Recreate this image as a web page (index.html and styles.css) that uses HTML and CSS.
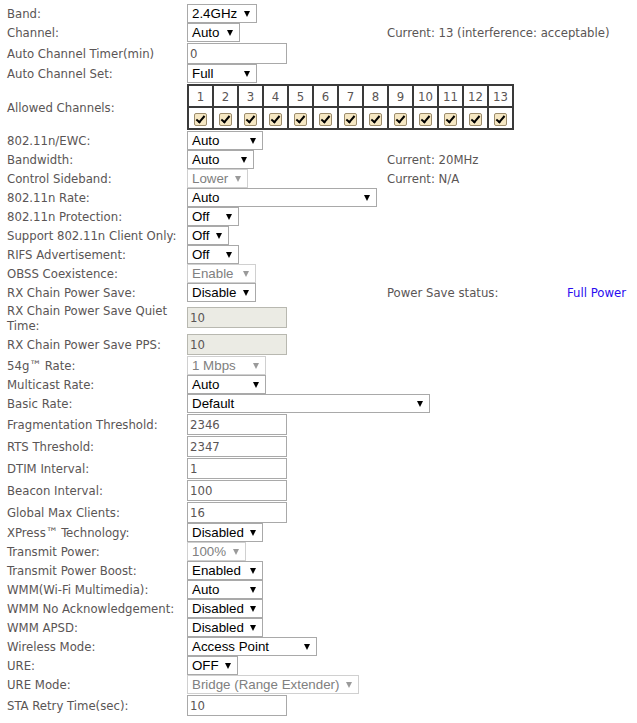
FILE: index.html
```html
<!DOCTYPE html>
<html>
<head>
<meta charset="utf-8">
<link rel="stylesheet" href="styles.css">
</head>
<body>
<div class="form">
  <div class="row rs"><div class="lbl">Band:</div><div class="ctl"><div class="sel w70"><span>2.4GHz</span><i class="arr"></i></div></div></div>
  <div class="row rs"><div class="lbl">Channel:</div><div class="ctl"><div class="sel w53"><span>Auto</span><i class="arr"></i></div></div><div class="info">Current: 13 (interference: acceptable)</div></div>
  <div class="row ri"><div class="lbl">Auto Channel Timer(min)</div><div class="ctl"><div class="inp">0</div></div></div>
  <div class="row rs"><div class="lbl">Auto Channel Set:</div><div class="ctl"><div class="sel w70"><span>Full</span><i class="arr"></i></div></div></div>
  <div class="row rch"><div class="lbl">Allowed Channels:</div><div class="ctl">
    <table class="chan">
      <tr><td>1</td><td>2</td><td>3</td><td>4</td><td>5</td><td>6</td><td>7</td><td>8</td><td>9</td><td>10</td><td>11</td><td>12</td><td>13</td></tr>
      <tr>
        <td><span class="cb"></span></td><td><span class="cb"></span></td><td><span class="cb"></span></td><td><span class="cb"></span></td><td><span class="cb"></span></td><td><span class="cb"></span></td><td><span class="cb"></span></td><td><span class="cb"></span></td><td><span class="cb"></span></td><td><span class="cb"></span></td><td><span class="cb"></span></td><td><span class="cb"></span></td><td><span class="cb"></span></td>
      </tr>
    </table>
  </div></div>
  <div class="row rs"><div class="lbl">802.11n/EWC:</div><div class="ctl"><div class="sel w76"><span>Auto</span><i class="arr"></i></div></div></div>
  <div class="row rs"><div class="lbl">Bandwidth:</div><div class="ctl"><div class="sel w67"><span>Auto</span><i class="arr"></i></div></div><div class="info">Current: 20MHz</div></div>
  <div class="row rs"><div class="lbl">Control Sideband:</div><div class="ctl"><div class="sel w61 dis"><span>Lower</span><i class="arr"></i></div></div><div class="info">Current: N/A</div></div>
  <div class="row rs"><div class="lbl">802.11n Rate:</div><div class="ctl"><div class="sel w190"><span>Auto</span><i class="arr"></i></div></div></div>
  <div class="row rs"><div class="lbl">802.11n Protection:</div><div class="ctl"><div class="sel w52"><span>Off</span><i class="arr"></i></div></div></div>
  <div class="row rs"><div class="lbl">Support 802.11n Client Only:</div><div class="ctl"><div class="sel w42"><span>Off</span><i class="arr"></i></div></div></div>
  <div class="row rs"><div class="lbl">RIFS Advertisement:</div><div class="ctl"><div class="sel w52"><span>Off</span><i class="arr"></i></div></div></div>
  <div class="row rs"><div class="lbl">OBSS Coexistence:</div><div class="ctl"><div class="sel w69 dis"><span>Enable</span><i class="arr"></i></div></div></div>
  <div class="row rs"><div class="lbl">RX Chain Power Save:</div><div class="ctl"><div class="sel w69"><span>Disable</span><i class="arr"></i></div></div><div class="info i180">Power Save status:</div><div class="link">Full Power</div></div>
  <div class="row rq"><div class="lbl">RX Chain Power Save Quiet Time:</div><div class="ctl"><div class="inp dis">10</div></div></div>
  <div class="row rp"><div class="lbl">RX Chain Power Save PPS:</div><div class="ctl"><div class="inp dis">10</div></div></div>
  <div class="row rs"><div class="lbl">54g™ Rate:</div><div class="ctl"><div class="sel w79 dis"><span>1 Mbps</span><i class="arr"></i></div></div></div>
  <div class="row rs"><div class="lbl">Multicast Rate:</div><div class="ctl"><div class="sel w79"><span>Auto</span><i class="arr"></i></div></div></div>
  <div class="row rs"><div class="lbl">Basic Rate:</div><div class="ctl"><div class="sel w243"><span>Default</span><i class="arr"></i></div></div></div>
  <div class="row ri"><div class="lbl">Fragmentation Threshold:</div><div class="ctl"><div class="inp">2346</div></div></div>
  <div class="row ri"><div class="lbl">RTS Threshold:</div><div class="ctl"><div class="inp">2347</div></div></div>
  <div class="row ri"><div class="lbl">DTIM Interval:</div><div class="ctl"><div class="inp">1</div></div></div>
  <div class="row ri"><div class="lbl">Beacon Interval:</div><div class="ctl"><div class="inp">100</div></div></div>
  <div class="row ri"><div class="lbl">Global Max Clients:</div><div class="ctl"><div class="inp">16</div></div></div>
  <div class="row rs"><div class="lbl">XPress™ Technology:</div><div class="ctl"><div class="sel w76"><span>Disabled</span><i class="arr"></i></div></div></div>
  <div class="row rs"><div class="lbl">Transmit Power:</div><div class="ctl"><div class="sel w59 dis"><span>100%</span><i class="arr"></i></div></div></div>
  <div class="row rs"><div class="lbl">Transmit Power Boost:</div><div class="ctl"><div class="sel w76"><span>Enabled</span><i class="arr"></i></div></div></div>
  <div class="row rs"><div class="lbl">WMM(Wi-Fi Multimedia):</div><div class="ctl"><div class="sel w76"><span>Auto</span><i class="arr"></i></div></div></div>
  <div class="row rs"><div class="lbl">WMM No Acknowledgement:</div><div class="ctl"><div class="sel w76"><span>Disabled</span><i class="arr"></i></div></div></div>
  <div class="row rs"><div class="lbl">WMM APSD:</div><div class="ctl"><div class="sel w76"><span>Disabled</span><i class="arr"></i></div></div></div>
  <div class="row rs"><div class="lbl">Wireless Mode:</div><div class="ctl"><div class="sel w130"><span>Access Point</span><i class="arr"></i></div></div></div>
  <div class="row rs"><div class="lbl">URE:</div><div class="ctl"><div class="sel w51"><span>OFF</span><i class="arr"></i></div></div></div>
  <div class="row rs"><div class="lbl">URE Mode:</div><div class="ctl"><div class="sel w172 dis"><span>Bridge (Range Extender)</span><i class="arr"></i></div></div></div>
  <div class="row ri"><div class="lbl">STA Retry Time(sec):</div><div class="ctl"><div class="inp">10</div></div></div>
</div>
</body>
</html>
```

FILE: styles.css
```css
html, body {
  margin: 0;
  padding: 0;
  background: #ffffff;
}
.form {
  padding: 4px 0 0 7px;
  font-family: "DejaVu Sans Condensed", "DejaVu Sans", sans-serif;
  font-size: 13px;
  color: #5a5555;
}
.row {
  display: flex;
  align-items: center;
}
.rs { height: 19px; }
.ri { height: 22px; }
.rch { height: 48px; }
.rq { height: 31px; }
.rp { height: 23px; }
.lbl {
  width: 180px;
  flex: none;
  line-height: 15px;
  padding-right: 4px;
  box-sizing: border-box;
}
.ctl {
  width: 200px;
  flex: none;
  display: flex;
  align-items: center;
}
.info { flex: none; }
.i180 { width: 180px; }
.link { color: #2a0cf0; }
.sel {
  box-sizing: border-box;
  height: 19px;
  border: 1px solid #a9a9a9;
  background: #fff;
  display: flex;
  align-items: center;
  justify-content: space-between;
  padding: 0 6px 0 4px;
  font-family: "Liberation Sans", Arial, sans-serif;
  font-size: 13.333px;
  color: #000;
  white-space: nowrap;
  flex: none;
}
.sel .arr {
  width: 0;
  height: 0;
  border-left: 3.5px solid transparent;
  border-right: 3.5px solid transparent;
  border-top: 6px solid #000;
  margin-left: 4px;
}
.sel.dis {
  color: #808080;
  border-color: #d0d0d0;
}
.sel.dis .arr { border-top-color: #9a9a9a; }
.w42 { width: 42px; }
.w51 { width: 51px; }
.w52 { width: 52px; }
.w53 { width: 53px; }
.w59 { width: 59px; }
.w61 { width: 61px; }
.w67 { width: 67px; }
.w69 { width: 69px; }
.w70 { width: 70px; }
.w76 { width: 76px; }
.w79 { width: 79px; }
.w130 { width: 130px; }
.w172 { width: 172px; }
.w190 { width: 190px; }
.w243 { width: 243px; }
.inp {
  box-sizing: border-box;
  width: 100px;
  height: 21px;
  border: 1px solid #a9a9a9;
  background: #fff;
  padding: 0 2px;
  line-height: 19px;
  font-size: 13px;
  color: #5a5555;
}
.inp.dis {
  background: #ebebe4;
  border-color: #b8b8b0;
}
.chan {
  flex: none;
  border-collapse: collapse;
  border: 2px solid #3a3a3a;
  margin: 0;
  table-layout: fixed;
  width: 327px;
}
.chan td {
  border: 2px solid #3a3a3a;
  width: 23px;
  height: 20px;
  padding: 0;
  text-align: center;
  font-size: 13px;
  color: #5a5555;
}
.cb {
  display: inline-block;
  width: 11px;
  height: 11px;
  border: 1px solid #9c8c6c;
  border-radius: 2px;
  background: #f5e7c3;
  position: relative;
  vertical-align: middle;
}
.cb::after {
  content: "";
  position: absolute;
  left: 3px;
  top: 0px;
  width: 3px;
  height: 7px;
  border-right: 2px solid #000;
  border-bottom: 2px solid #000;
  transform: rotate(40deg);
}
```
